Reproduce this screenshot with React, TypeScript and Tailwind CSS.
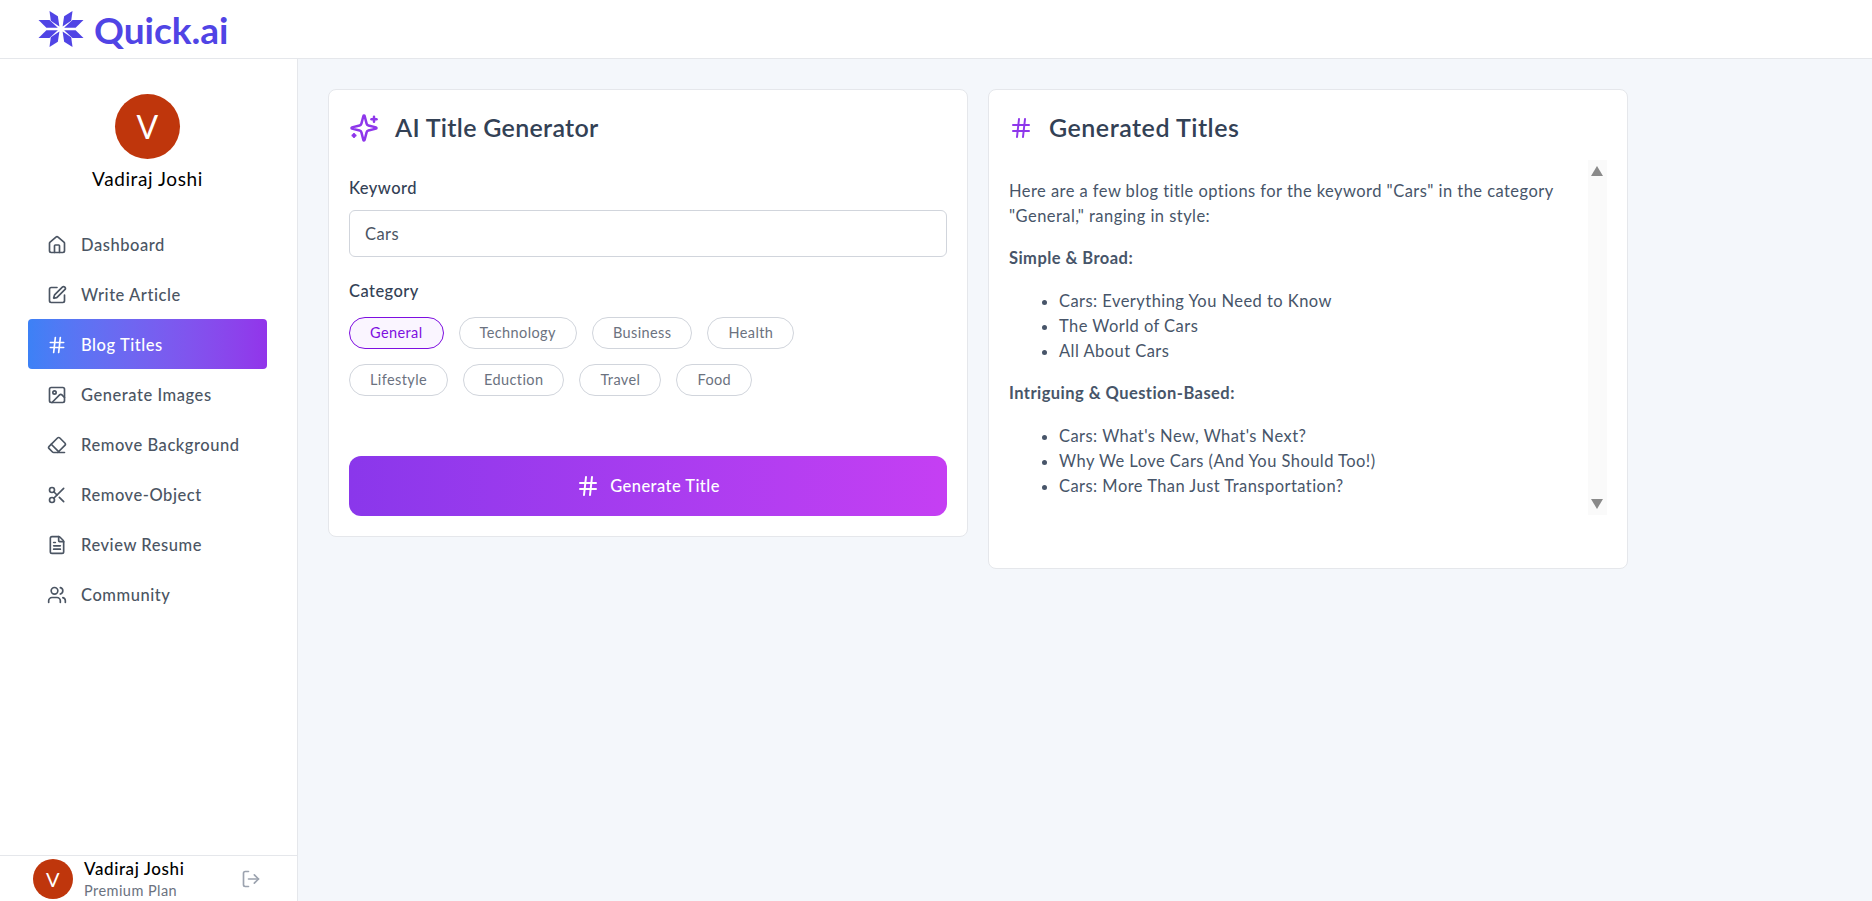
import { Eraser, FileText, Hash, House, Image, LogOut, Scissors, SquarePen, Users } from 'lucide-react'

const NAV_ITEMS = [
  { label: 'Dashboard', icon: House },
  { label: 'Write Article', icon: SquarePen },
  { label: 'Blog Titles', icon: Hash, active: true },
  { label: 'Generate Images', icon: Image },
  { label: 'Remove Background', icon: Eraser },
  { label: 'Remove-Object', icon: Scissors },
  { label: 'Review Resume', icon: FileText },
  { label: 'Community', icon: Users },
]

const CATEGORIES = [
  ['General', 'Technology', 'Business', 'Health'],
  ['Lifestyle', 'Eduction', 'Travel', 'Food'],
]

// petal tips of the logo star, relative to its centre
const PETAL_TIPS = [
  [-11.5, -18],
  [11.5, -18],
  [22.5, -9],
  [22.5, 9],
  [11.5, 18],
  [-11.5, 18],
  [-22.5, 9],
  [-22.5, -9],
]

function petal(x: number, y: number) {
  const len = Math.hypot(x, y)
  const nx = -y / len
  const ny = x / len
  const side = 4.2
  const pts = [
    [x, y],
    [x * 0.58 + nx * side, y * 0.58 + ny * side],
    [x * 0.14, y * 0.14],
    [x * 0.58 - nx * side, y * 0.58 - ny * side],
  ]
  return pts.map((p) => p.join(',')).join(' ')
}

function Logo() {
  return (
    <svg width="46" height="38" viewBox="-23 -19 46 38" className="shrink-0">
      {PETAL_TIPS.map(([x, y]) => (
        <polygon key={`${x}${y}`} points={petal(x, y)} fill="#5044e5" />
      ))}
    </svg>
  )
}

function SparkleIcon() {
  return (
    <svg width="30" height="30" viewBox="0 0 24 24" fill="none" stroke="#8e37eb" strokeWidth="2" strokeLinecap="round" strokeLinejoin="round" className="shrink-0">
      <path d="M9.937 15.5A2 2 0 0 0 8.5 14.063l-6.135-1.582a.5.5 0 0 1 0-.962L8.5 9.936A2 2 0 0 0 9.937 8.5l1.582-6.135a.5.5 0 0 1 .963 0L14.063 8.5A2 2 0 0 0 15.5 9.937l6.135 1.581a.5.5 0 0 1 0 .964L15.5 14.063a2 2 0 0 0-1.437 1.437l-1.582 6.135a.5.5 0 0 1-.963 0z" />
      <path d="M20 3v4" />
      <path d="M22 5h-4" />
      <path d="M4 17v2" />
      <path d="M5 18H3" />
    </svg>
  )
}

function Sidebar() {
  return (
    <aside className="flex w-[298px] shrink-0 flex-col border-r border-gray-200 bg-white">
      <div className="flex flex-1 flex-col pt-[35px]">
        <div className="mr-[2px] flex h-[65px] w-[65px] items-center justify-center self-center rounded-full bg-[#bf360c] text-[32px] text-white">V</div>
        <p className="mr-[2px] mt-[8px] text-center text-[19px] leading-[24px] tracking-[0.6px] text-black">Vadiraj Joshi</p>
        <nav className="mt-[28px] flex flex-col pl-[28px] pr-[30px]">
          {NAV_ITEMS.map(({ label, icon: Icon, active }) => (
            <div
              key={label}
              className={`flex h-[50px] items-center gap-[14px] rounded pl-[19px] pt-[2px] text-[16.5px] font-medium tracking-[0.55px] ${active ? 'bg-gradient-to-r from-[#3c81f6] to-[#9234ea] text-white' : 'text-[#4b5563]'}`}
            >
              <Icon size={20} strokeWidth={2} />
              {label}
            </div>
          ))}
        </nav>
      </div>
      <div className="flex h-[46px] items-center border-t border-gray-200 pl-[33px] pr-[36px] pt-[1px]">
        <div className="flex h-[40px] w-[40px] shrink-0 items-center justify-center rounded-full bg-[#bf360c] text-[20px] text-white">V</div>
        <div className="ml-[11px] flex-1">
          <p className="text-[17px] font-medium leading-[24px] tracking-[0.6px] text-black">Vadiraj Joshi</p>
          <p className="text-[14.5px] leading-[20px] text-[#6b7280]">Premium Plan</p>
        </div>
        <LogOut size={20} strokeWidth={2} className="text-[#9ca3af]" />
      </div>
    </aside>
  )
}

function TitleForm() {
  return (
    <section className="w-[640px] rounded-lg border border-gray-200 bg-white p-[20px]">
      <div className="flex h-[36px] items-center gap-[16px]">
        <SparkleIcon />
        <h1 className="text-[25px] font-semibold tracking-[0.3px] text-[#334155]">AI Title Generator</h1>
      </div>
      <p className="mt-[30px] text-[16.5px] font-medium leading-[24px] text-[#334155]">Keyword</p>
      <div className="mt-[10px] flex h-[47px] items-center rounded-md border border-gray-300 px-[15px] pt-[1px] text-[16.5px] text-[#4b5563]">Cars</div>
      <p className="mt-[22px] text-[16.5px] font-medium leading-[24px] text-[#334155]">Category</p>
      <div className="mt-[14px] flex flex-col gap-[15px]">
        {CATEGORIES.map((row) => (
          <div key={row[0]} className="flex gap-[15px]">
            {row.map((c) => (
              <span
                key={c}
                className={`flex h-[32px] items-center rounded-full border px-[20px] text-[14.5px] tracking-[0.4px] ${c === 'General' ? 'border-[#7e0fe0] bg-[#faf5ff] text-[#7e0fe0]' : 'border-gray-300 text-[#6b7280]'}`}
              >
                {c}
              </span>
            ))}
          </div>
        ))}
      </div>
      <button className="mt-[60px] flex h-[60px] w-full items-center justify-center gap-[10px] rounded-xl bg-gradient-to-r from-[#8a37eb] to-[#c53ff3] text-[16.5px] font-medium text-white">
        <Hash size={24} strokeWidth={2} />
        Generate Title
      </button>
    </section>
  )
}

function Results() {
  return (
    <section className="w-[640px] rounded-lg border border-gray-200 bg-white pb-[53px] pl-[20px] pr-[20px] pt-[20px]">
      <div className="flex h-[36px] items-center gap-[16px]">
        <Hash size={24} strokeWidth={2} className="text-[#8e37eb]" />
        <h2 className="text-[25px] font-semibold tracking-[0.5px] text-[#334155]">Generated Titles</h2>
      </div>
      <div className="mt-[14px] flex h-[355px]">
        <div className="flex-1 pr-[25px] pt-[19px] text-[16.5px] leading-[25px] text-[#475569]">
          <p>Here are a few blog title options for the keyword "Cars" in the category "General," ranging in style:</p>
          <p className="mt-[17px] font-bold">Simple &amp; Broad:</p>
          <ul className="mt-[18px] list-disc pl-[50px]">
            <li>Cars: Everything You Need to Know</li>
            <li>The World of Cars</li>
            <li>All About Cars</li>
          </ul>
          <p className="mt-[17px] font-bold">Intriguing &amp; Question-Based:</p>
          <ul className="mt-[18px] list-disc pl-[50px]">
            <li>Cars: What's New, What's Next?</li>
            <li>Why We Love Cars (And You Should Too!)</li>
            <li>Cars: More Than Just Transportation?</li>
          </ul>
        </div>
        <div className="flex w-[19px] shrink-0 flex-col items-center justify-between bg-[#fafafa] py-[6px] pr-[1px]">
          <span className="h-0 w-0 border-x-[6.5px] border-b-[10px] border-x-transparent border-b-[#8a8a8a]" />
          <span className="h-0 w-0 border-x-[6.5px] border-t-[10px] border-x-transparent border-t-[#8a8a8a]" />
        </div>
      </div>
    </section>
  )
}

export default function App() {
  return (
    <div className="flex h-[901px] flex-col overflow-hidden bg-[#f4f7fb] font-['Lato','Noto_Sans',sans-serif] tracking-[0.45px]">
      <header className="flex h-[59px] shrink-0 items-center gap-[10px] border-b border-gray-200 bg-white pl-[38px]">
        <Logo />
        <span className="text-[37px] font-bold leading-none tracking-normal text-[#5044e5]">Quick.ai</span>
      </header>
      <div className="flex flex-1 overflow-hidden">
        <Sidebar />
        <main className="flex flex-1 items-start gap-[20px] pl-[30px] pt-[30px]">
          <TitleForm />
          <Results />
        </main>
      </div>
    </div>
  )
}
